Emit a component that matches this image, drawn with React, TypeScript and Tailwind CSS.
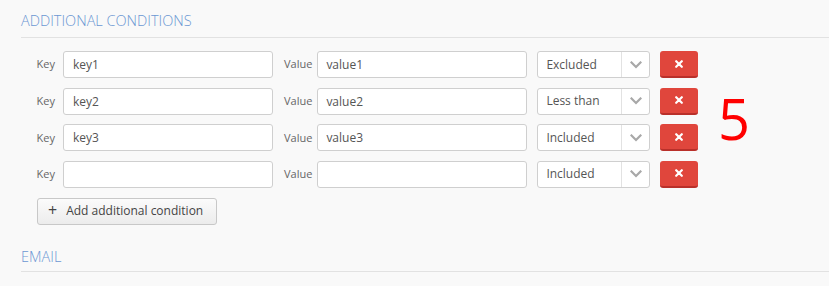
import React from "react";

const rows = [
  { key: "key1", value: "value1", op: "Excluded" },
  { key: "key2", value: "value2", op: "Less than" },
  { key: "key3", value: "value3", op: "Included" },
  { key: "", value: "", op: "Included" },
];

function Chevron() {
  return (
    <svg width="12" height="8" viewBox="0 0 12 8" fill="none">
      <path d="M1.5 1.5 L6 6 L10.5 1.5" stroke="#a8a8a8" strokeWidth="2.2" strokeLinecap="square" />
    </svg>
  );
}

export default function App() {
  return (
    <div
      className="w-[829px] h-[286px] bg-[#f9f9f9] overflow-hidden relative"
      style={{ fontFamily: '"Open Sans", "Noto Sans", sans-serif' }}
    >
      <div className="pl-[21px]">
        <div className="pt-[10px] h-[38px] border-b border-[#e2e2e2] text-[14.5px] font-light text-[#6b97d3] leading-[22px]">
          ADDITIONAL CONDITIONS
        </div>
        <div className="pt-[13px] flex flex-col gap-[9.67px]">
          {rows.map((r, i) => (
            <div key={i} className="flex items-center h-[27px]">
              <div className="w-[34px] text-right text-[11px] text-[#666]">Key</div>
              <input
                readOnly
                value={r.key}
                className="ml-[8px] w-[210px] h-[27px] bg-white border border-[#cfcfcf] rounded-[3px] px-[9px] text-[12px] text-[#555] outline-none"
              />
              <div className="ml-[11px] text-[11px] text-[#666]">Value</div>
              <input
                readOnly
                value={r.value}
                className="ml-[5px] w-[210px] h-[27px] bg-white border border-[#cfcfcf] rounded-[3px] px-[8px] text-[12px] text-[#555] outline-none"
              />
              <div className="ml-[10px] w-[113px] h-[27px] bg-white border border-[#cfcfcf] rounded-[3px] flex items-stretch">
                <div className="flex-1 flex items-center pl-[8px] text-[12px] text-[#555]">{r.op}</div>
                <div className="w-[28px] border-l border-[#e2e2e2] flex items-center justify-center">
                  <Chevron />
                </div>
              </div>
              <div className="ml-[10px] w-[38px] h-[27px] rounded-[3px] bg-[#e0463c] border-b-[2px] border-[#b9302a] flex items-center justify-center">
                <svg width="8" height="8" viewBox="0 0 8 8">
                  <path d="M1.2 1.2 L6.8 6.8 M6.8 1.2 L1.2 6.8" stroke="white" strokeWidth="2.2" strokeLinecap="round" />
                </svg>
              </div>
            </div>
          ))}
        </div>
        <div className="pt-[10px] pl-[16px]">
          <div className="w-[180px] h-[27px] rounded-[3px] border border-[#c8c8c8] bg-gradient-to-b from-[#fbfbfb] to-[#ececec] flex items-center pl-[10px] gap-[9px] text-[12px] text-[#444]">
            <span className="text-[16px] leading-none -mt-[2px]">+</span>
            <span>Add additional condition</span>
          </div>
        </div>
        <div className="mt-[21px] h-[26px] border-b border-[#e2e2e2] text-[14.5px] font-light text-[#6b97d3] leading-[22px]">
          EMAIL
        </div>
      </div>
      <div className="absolute left-[718px] top-[80px] text-[56px] leading-[76px] text-[#ff0000]">5</div>
    </div>
  );
}
